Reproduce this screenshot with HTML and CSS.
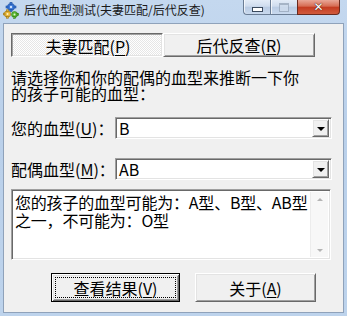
FILE: index.html
```html
<!DOCTYPE html>
<html lang="zh-CN">
<head>
    <meta charset="UTF-8">
    <title>后代血型测试(夫妻匹配/后代反查)</title>
    <link rel="stylesheet" href="styles.css">
</head>
<body>
    <div class="window">
        <!-- Title bar -->
        <div class="titlebar">
            <svg class="app-icon" width="16" height="17" viewBox="0 0 16 17">
                <g fill="#3a78d8" stroke="#1d4fa0" stroke-width="0.6">
                    <circle cx="8" cy="5" r="3.6"/>
                    <rect x="7" y="0.4" width="2" height="2"/>
                    <rect x="7" y="7.6" width="2" height="2"/>
                    <rect x="3" y="4" width="2" height="2"/>
                    <rect x="11" y="4" width="2" height="2"/>
                </g>
                <circle cx="8" cy="5" r="1.2" fill="#cfe3ff"/>
                <g fill="#e8b73a" stroke="#9a7414" stroke-width="0.6">
                    <circle cx="4.5" cy="12" r="3.2"/>
                    <rect x="3.6" y="7.8" width="1.8" height="1.6"/>
                    <rect x="3.6" y="14.6" width="1.8" height="1.6"/>
                    <rect x="0.4" y="11.1" width="1.6" height="1.8"/>
                </g>
                <circle cx="4.5" cy="12" r="1" fill="#fff3c8"/>
                <g fill="#5cb833" stroke="#2f7a14" stroke-width="0.6">
                    <circle cx="11.5" cy="12.5" r="3"/>
                    <rect x="10.6" y="14.7" width="1.8" height="1.6"/>
                    <rect x="14" y="11.6" width="1.6" height="1.8"/>
                </g>
                <circle cx="11.5" cy="12.5" r="1" fill="#e0f7cf"/>
            </svg>
            <span class="title">后代血型测试(夫妻匹配/后代反查)</span>
            <div class="caption">
                <span class="cap cap-min"><i></i></span>
                <span class="cap cap-max"><i></i></span>
                <span class="cap cap-close">✕</span>
            </div>
        </div>

        <!-- Client area -->
        <div class="client">
            <div class="tabs">
                <div class="tab tab-down">夫妻匹配(<u>P</u>)</div>
                <div class="tab">后代反查(<u>R</u>)</div>
            </div>

            <p class="intro">请选择你和你的配偶的血型来推断一下你的孩子可能的血型：</p>

            <div class="field field-first">
                <label class="field-label">您的血型(<u>U</u>)：</label>
                <div class="combo">
                    <span class="combo-value">B</span>
                    <span class="combo-drop"><i></i></span>
                </div>
            </div>

            <div class="field field-second">
                <label class="field-label">配偶血型(<u>M</u>)：</label>
                <div class="combo">
                    <span class="combo-value">AB</span>
                    <span class="combo-drop"><i></i></span>
                </div>
            </div>

            <div class="memo">
                <div class="memo-text">
                    <div>您的孩子的血型可能为：A型、B型、AB型</div>
                    <div>之一，不可能为：O型</div>
                </div>
                <div class="vscroll">
                    <span class="arrow arrow-up"></span>
                    <span class="arrow arrow-down"></span>
                </div>
            </div>

            <div class="buttons">
                <div class="btn btn-default"><span class="focus">查看结果(<u>V</u>)</span></div>
                <div class="btn btn-about">关于(<u>A</u>)</div>
            </div>
        </div>
    </div>
</body>
</html>
```

FILE: styles.css
```css
body {
    margin: 0;
    background: #bcd3ec;
    font-family: "Noto Sans CJK SC", sans-serif;
}
.window {
    width: 347px;
    height: 316px;
    background: linear-gradient(180deg, #c4d8ef 0%, #bad0ea 40%, #bdd3ec 100%);
    overflow: hidden;
}

/* title bar */
.titlebar {
    height: 23px;
    display: flex;
    align-items: flex-start;
}
.app-icon {
    margin: 2px 0 0 3px;
}
.title {
    margin: 2px 0 0 5px;
    font-size: 12px;
    line-height: 16px;
    color: #1a1a1a;
}
.caption {
    margin-left: auto;
    margin-right: 7px;
    display: flex;
}
.cap {
    height: 15px;
    box-sizing: border-box;
    border: 1px solid #6b7d95;
    border-top: none;
    display: flex;
    align-items: center;
    justify-content: center;
}
.cap-min,
.cap-max {
    width: 27px;
    background: linear-gradient(180deg, #e3ecf7 0%, #cfdcee 45%, #b9cbe3 50%, #c9d9ee 100%);
    box-shadow: inset 1px 0 rgba(255,255,255,0.7);
}
.cap-min {
    border-radius: 0 0 0 4px;
    border-right: none;
}
.cap-min i {
    width: 9px;
    height: 3px;
    margin-top: 4px;
    background: #fff;
    border: 1px solid #3b4a5e;
}
.cap-max {
    border-right: none;
}
.cap-max i {
    width: 8px;
    height: 6px;
    border: 1px solid #9aa9bc;
    border-top-width: 2px;
    background: #cfdced;
    opacity: 0.8;
}
.cap-close {
    width: 43px;
    border-radius: 0 0 4px 0;
    border-color: #6a2a1e;
    background: linear-gradient(180deg, #e9a797 0%, #d66b52 45%, #c43b20 50%, #d05a3c 100%);
    color: #fff;
    font-size: 12px;
    font-weight: bold;
    font-family: "DejaVu Sans", sans-serif;
    text-shadow: 0 0 1px #3a1008, 0 0 1px #3a1008;
}

/* client */
.client {
    margin: 0 3px;
    height: 290px;
    box-sizing: border-box;
    border: 1px solid #8fa2ba;
    background: #f0f0f0;
    padding: 9px 7px 0 7px;
    font-size: 16px;
    color: #000;
}
u {
    text-decoration: underline;
    text-underline-offset: 2px;
}

/* classic 3d edges */
.tab,
.btn,
.combo-drop {
    border: 1px solid;
    border-color: #fff #696969 #696969 #fff;
    box-shadow: inset 1px 1px #e3e3e3, inset -1px -1px #a0a0a0;
    background: #f0f0f0;
}

.tabs {
    display: flex;
}
.tab {
    width: 152px;
    height: 24px;
    box-sizing: border-box;
    display: flex;
    align-items: center;
    justify-content: center;
    line-height: 16px;
}
.tab-down {
    border-color: #696969 #fff #fff #696969;
    box-shadow: inset 1px 1px #a0a0a0, inset -1px -1px #e3e3e3;
    background: repeating-conic-gradient(#ffffff 0 25%, #e6e6e6 0 50%) 0 0 / 2px 2px;
    padding: 2px 0 0 2px;
}

.intro {
    margin: 12px 0 0 0;
    width: 292px;
    line-height: 16px;
}

.field {
    display: flex;
    align-items: center;
}
.field-first {
    margin-top: 16px;
}
.field-second {
    margin-top: 19px;
}
.field-label {
    width: 104px;
    line-height: 16px;
}
.combo {
    width: 217px;
    height: 22px;
    box-sizing: border-box;
    border: 1px solid;
    border-color: #a0a0a0 #fff #fff #a0a0a0;
    box-shadow: inset 1px 1px #696969, inset -1px -1px #e3e3e3;
    background: #fff;
    display: flex;
    align-items: center;
    padding: 2px 2px 2px 3px;
}
.combo-value {
    flex: 1;
    line-height: 16px;
}
.combo-drop {
    width: 17px;
    height: 18px;
    box-sizing: border-box;
    display: flex;
    align-items: center;
    justify-content: center;
}
.combo-drop i {
    width: 0;
    height: 0;
    border-left: 4px solid transparent;
    border-right: 4px solid transparent;
    border-top: 4px solid #000;
    margin-top: 1px;
}

.memo {
    margin-top: 9px;
    width: 320px;
    height: 71px;
    box-sizing: border-box;
    border: 1px solid;
    border-color: #a0a0a0 #fff #fff #a0a0a0;
    box-shadow: inset 1px 1px #696969, inset -1px -1px #e3e3e3;
    background: #fff;
    display: flex;
    padding: 2px;
}
.memo-text {
    flex: 1;
    min-width: 0;
    padding: 1px 0 0 1px;
    line-height: 18px;
    white-space: nowrap;
    letter-spacing: -0.2px;
}
.vscroll {
    width: 17px;
    flex: none;
    background: #f7f7f7;
    border-left: 1px solid #ececec;
    display: flex;
    flex-direction: column;
    justify-content: space-between;
    align-items: center;
    padding: 6px 0 5px;
}
.arrow {
    width: 0;
    height: 0;
    border-left: 3px solid transparent;
    border-right: 3px solid transparent;
}
.arrow-up {
    border-bottom: 3px solid #b4b4b4;
}
.arrow-down {
    border-top: 3px solid #b4b4b4;
}

.buttons {
    margin: 13px 0 0 40px;
    display: flex;
    gap: 15px;
}
.btn {
    height: 29px;
    box-sizing: border-box;
    display: flex;
    align-items: center;
    justify-content: center;
    line-height: 16px;
}
.btn-default {
    width: 129px;
    border: 1px solid #000;
    box-shadow: inset 1px 1px #fff, inset -1px -1px #696969, inset 2px 2px #e3e3e3, inset -2px -2px #a0a0a0;
    padding: 3px;
}
.focus {
    flex: 1;
    align-self: stretch;
    display: flex;
    align-items: center;
    justify-content: center;
    outline: 1px dotted #000;
    outline-offset: -1px;
}
.btn-about {
    width: 121px;
}
```
